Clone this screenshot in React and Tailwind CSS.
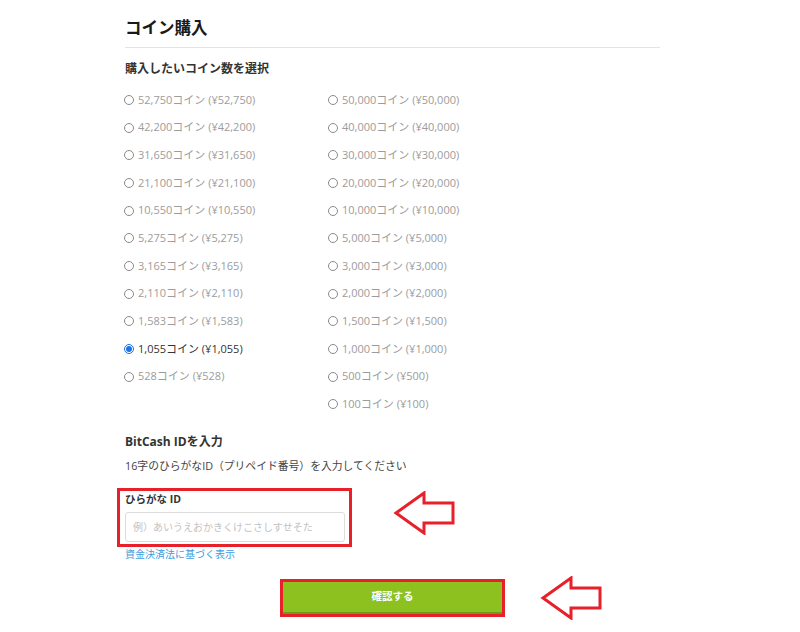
import { useState } from "react";

const LEFT = [
  "52,750コイン (¥52,750)",
  "42,200コイン (¥42,200)",
  "31,650コイン (¥31,650)",
  "21,100コイン (¥21,100)",
  "10,550コイン (¥10,550)",
  "5,275コイン (¥5,275)",
  "3,165コイン (¥3,165)",
  "2,110コイン (¥2,110)",
  "1,583コイン (¥1,583)",
  "1,055コイン (¥1,055)",
  "528コイン (¥528)",
];

const RIGHT = [
  "50,000コイン (¥50,000)",
  "40,000コイン (¥40,000)",
  "30,000コイン (¥30,000)",
  "20,000コイン (¥20,000)",
  "10,000コイン (¥10,000)",
  "5,000コイン (¥5,000)",
  "3,000コイン (¥3,000)",
  "2,000コイン (¥2,000)",
  "1,500コイン (¥1,500)",
  "1,000コイン (¥1,000)",
  "500コイン (¥500)",
  "100コイン (¥100)",
];

function Radio({ label, checked, onSelect }) {
  return (
    <label className="flex h-[27.7px] cursor-pointer items-center gap-[4px]" onClick={onSelect}>
      {checked ? (
        <span className="flex h-[10px] w-[10px] items-center justify-center rounded-full border border-[#1a73e8] bg-white">
          <span className="h-[6px] w-[6px] rounded-full bg-[#1a73e8]" />
        </span>
      ) : (
        <span className="h-[10px] w-[10px] rounded-full border border-[#8a8a8a] bg-white" />
      )}
      <span className={checked ? "text-[11px] text-[#333]" : "text-[11px] text-[#9c9c9c]"}>{label}</span>
    </label>
  );
}

// hollow annotation arrow pointing left
function Arrow({ className }) {
  return (
    <svg className={className} width="62" height="44" viewBox="0 0 62 44" fill="none">
      <path
        d="M3 22 L31 2 L31 12 L60 12 L60 32 L31 32 L31 42 Z"
        stroke="#e8202a"
        strokeWidth="3"
        strokeLinejoin="miter"
        fill="white"
      />
    </svg>
  );
}

export default function App() {
  const [selected, setSelected] = useState("1,055コイン (¥1,055)");

  return (
    <div
      className="relative h-[632px] w-[800px] overflow-hidden bg-white"
      style={{ fontFamily: '"Open Sans", "Noto Sans CJK JP", sans-serif' }}
    >
      <div className="ml-[125px] w-[535px] pt-[16px]">
        <h1 className="border-b border-[#e3e3e3] pb-[7px] text-[16.5px] font-bold leading-[24px] text-[#1a1a1a]">
          コイン購入
        </h1>

        <h2 className="mt-[12px] text-[12px] font-bold leading-[18px] text-[#333]">購入したいコイン数を選択</h2>

        {/* coin options */}
        <div className="mt-[8px] grid grid-cols-[204px_1fr] -ml-[1px]">
          <div className="flex flex-col">
            {LEFT.map((l) => (
              <Radio key={l} label={l} checked={selected === l} onSelect={() => setSelected(l)} />
            ))}
          </div>
          <div className="flex flex-col">
            {RIGHT.map((l) => (
              <Radio key={l} label={l} checked={selected === l} onSelect={() => setSelected(l)} />
            ))}
          </div>
        </div>

        <h2 className="mt-[15px] text-[12px] font-bold leading-[18px] text-[#333]">BitCash IDを入力</h2>
        <p className="mt-[6px] text-[10.8px] leading-[18px] text-[#444]">
          16字のひらがなID（プリペイド番号）を入力してください
        </p>

        <div className="-ml-[8px] mt-[13px] w-[235px] border-[3px] border-[#e8202a] px-[5px] pb-[2px] pt-[1px]">
          <div className="text-[10.5px] font-bold leading-[14px] text-[#333]">ひらがな ID</div>
          <input
            className="mt-[6px] h-[30px] w-[220px] rounded-[3px] border border-[#dcdcdc] px-[7px] text-[10px] text-[#333] outline-none placeholder:text-[#c2c2c2]"
            placeholder="例）あいうえおかきくけこさしすせそた"
          />
        </div>

        <a href="#" className="block text-[10px] leading-[14px] text-[#3d9be0]">
          資金決済法に基づく表示
        </a>

        <div className="ml-[155px] mt-[18px] w-[225px] border-[3px] border-[#e8202a]">
          <button className="flex h-[32px] w-full items-center justify-center border-b-2 border-[#6e9b18] bg-[#8cc11f] text-[10.5px] font-bold text-white">
            確認する
          </button>
        </div>
      </div>

      <Arrow className="absolute left-[393px] top-[491px]" />
      <Arrow className="absolute left-[540px] top-[576px]" />
    </div>
  );
}
